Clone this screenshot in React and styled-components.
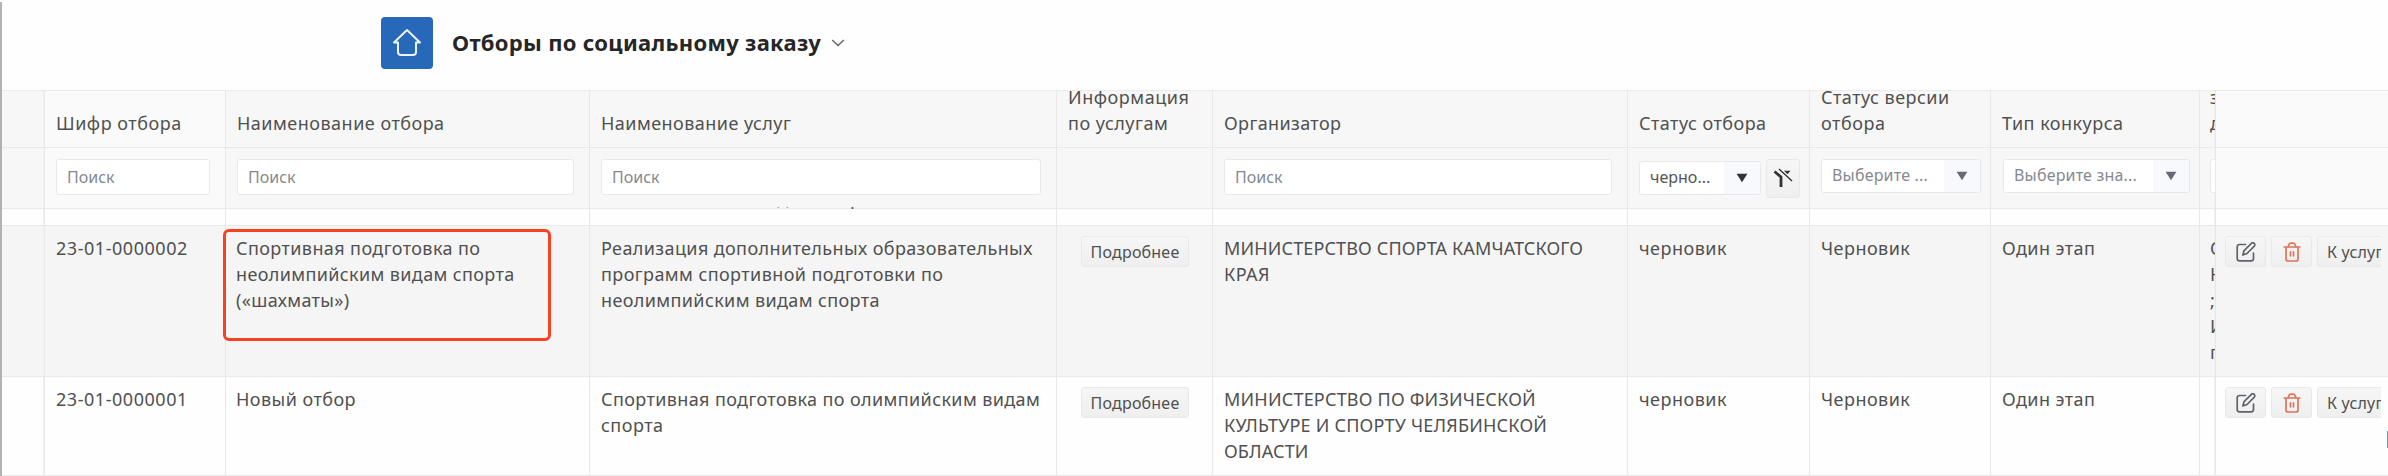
import React from "react";
import styled, { createGlobalStyle } from "styled-components";

const Global = createGlobalStyle`
  *, *::before, *::after { box-sizing: border-box; }
  body {
    margin: 0;
    background: #fefefe;
    font-family: "Noto Sans", "Open Sans", sans-serif;
    font-size: 18px;
    line-height: 26px;
    color: #505050;
    overflow: hidden;
  }
`;

const Page = styled.main`
  position: relative;
  width: 2388px;
  height: 476px;
  overflow: hidden;
`;

const TopBar = styled.header`
  display: flex;
  align-items: center;
  height: 91px;
  padding: 0 0 5px 381px;
  border-bottom: 1px solid #ebebeb;
`;

const HomeButton = styled.button`
  display: grid;
  place-items: center;
  width: 52px;
  height: 52px;
  margin-right: 19px;
  padding: 0;
  border: 0;
  border-radius: 4px;
  background: #2868b9;
  color: #eef4fb;
`;

const Title = styled.h1`
  margin: 0 10px 2px 0;
  font-size: 22px;
  line-height: 30px;
  font-weight: 700;
  letter-spacing: 0.3px;
  color: #262626;
  white-space: nowrap;
`;

const Row = styled.div`
  display: grid;
  grid-template-columns: 45px 181px 364px 467px 156px 415px 182px 181px 209px 16px 172px;
  height: ${(p) => p.$h}px;
  background: ${(p) => p.$bg || "#fefefe"};
`;

const Cell = styled.div`
  min-width: 0;
  overflow: hidden;
  padding: 9px 0 0 ${(p) => p.$left ?? 11}px;
  border-right: 1px solid #e8e8e8;
  border-bottom: 1px solid #e8e8e8;
  box-shadow: ${(p) => (p.$edge ? "inset -1px 0 0 #f1f1f1" : "none")};
  background: ${(p) => (p.$pinned ? "#fafafa" : "transparent")};

  &:last-child { border-right: 0; }
`;

const HeadCell = styled(Cell)`
  display: flex;
  flex-direction: column;
  justify-content: flex-end;
  padding-top: 0;
  padding-bottom: 11px;
`;

const FilterCell = styled(Cell)`
  display: flex;
  align-items: flex-start;
  padding-top: 11px;
`;

const ButtonCell = styled(Cell)`
  padding-top: 10px;
`;

const GapCell = styled(Cell)`
  padding: 0;
  overflow: visible;
`;

const Line = styled.div`
  flex: none;
  white-space: nowrap;
  letter-spacing: ${(p) => p.$ls ?? 0.45}px;
`;

const Input = styled.div`
  flex: none;
  display: flex;
  align-items: center;
  width: ${(p) => p.$w}px;
  height: 36px;
  padding: 0 0 0 10px;
  border: 1px solid #e9e9e9;
  border-radius: 3px;
  background: #fff;
  font-size: 16px;
  color: #858990;
`;

const Select = styled.div`
  flex: none;
  display: flex;
  width: ${(p) => p.$w}px;
  height: 34px;
  margin-top: ${(p) => (p.$active ? 2 : 0)}px;
  border: 1px solid #e6e8eb;
  border-radius: 3px;
  background: #fff;
  overflow: hidden;
  color: ${(p) => (p.$active ? "#555" : "#858990")};
`;

const SelectValue = styled.span`
  flex: 1;
  padding-left: 10px;
  font-size: 16px;
  line-height: 30px;
  letter-spacing: ${(p) => p.$ls}px;
  white-space: nowrap;
`;

const SelectTrigger = styled.span`
  display: grid;
  place-items: center;
  width: 36px;
  padding-bottom: 1px;
  background: #f7f9fc;
  color: ${(p) => (p.$active ? "#333" : "#666b73")};
`;

const Button = styled.button`
  flex: none;
  display: flex;
  align-items: center;
  justify-content: center;
  width: ${(p) => p.$w}px;
  height: 31px;
  padding: 0;
  border: 1px solid #e9e9e9;
  border-radius: 3px;
  background: linear-gradient(#f6f6f6, #efefef);
  font: 16px/24px "Noto Sans", sans-serif;
  letter-spacing: 0.2px;
  white-space: nowrap;
  color: #505050;
`;

const ClearButton = styled(Button)`
  width: 34px;
  height: 39px;
  margin-left: 5px;
  padding-bottom: 2px;
`;

const Actions = styled.div`
  display: flex;
  gap: 5px;
  width: 156px;
  overflow: hidden;

  ${Button}:last-child {
    justify-content: flex-start;
    padding-left: 9px;
  }
`;

const Marked = styled.div`
  position: absolute;
  left: 223px;
  top: 229px;
  width: 328px;
  height: 112px;
  border: 3px solid #f5421f;
  border-radius: 6px;
`;

const LeftEdge = styled.div`
  position: absolute;
  left: 0;
  top: 2px;
  bottom: 0;
  width: 2px;
  background: #b2b2b2;
`;

const Caret = styled.div`
  position: absolute;
  right: 0;
  top: 431px;
  width: 1px;
  height: 17px;
  background: #4a9bea;
`;

const Scrolled = styled.div`
  margin-top: -2px;
  height: 18px;
  padding-left: 11px;
  overflow: hidden;

  ${Line} { margin-top: -22px; }
`;

const Tri = () => (
  <svg width="12" height="10" viewBox="0 0 12 10" fill="currentColor">
    <path d="M0.6 0.8h10.8L6 9.2z" />
  </svg>
);

const Home = () => (
  <svg width="30" height="30" viewBox="0 0 30 30" fill="none" stroke="currentColor" strokeWidth="2" strokeLinejoin="round" strokeLinecap="round">
    <path d="M6 14.500H2L15 2l13 12.500h-4V24a3 3 0 0 1-3 3H9a3 3 0 0 1-3-3z" />
  </svg>
);

const Chevron = () => (
  <svg width="14" height="10" viewBox="0 0 14 10" fill="none" stroke="#666" strokeWidth="1.5">
    <path d="M1.200 2l5.800 5.500L12.800 2" />
  </svg>
);

const ClearFilter = () => (
  <svg width="20" height="20" viewBox="0 0 20 20" fill="none" stroke="#333" strokeWidth="2">
    <path d="M1.500 3.500L8 9v10" strokeWidth="2.800" />
    <path d="M6 1l13 12" strokeWidth="1.400" />
    <path d="M11 2.800h6.500l-3 3.500z" fill="#333" stroke="none" />
  </svg>
);

const Edit = () => (
  <svg width="20" height="20" viewBox="0 0 20 20" fill="none" stroke="#60636a" strokeWidth="1.700" strokeLinejoin="round" strokeLinecap="round">
    <path d="M9.500 2.500H3.500A2.300 2.300 0 0 0 1.200 4.800v11.700a2.300 2.300 0 0 0 2.300 2.300h11.700a2.300 2.300 0 0 0 2.300-2.300V11" />
    <path d="M15.400 1.400a1.900 1.900 0 0 1 2.900 2.700L11 11.500l-4.200 1.400 1.300-4.300z" />
  </svg>
);

const Trash = () => (
  <svg width="18" height="20" viewBox="0 0 18 20" fill="none" stroke="#e07558" strokeWidth="1.700" strokeLinejoin="round" strokeLinecap="round">
    <path d="M1.200 5h15.600M3 5v12a2 2 0 0 0 2 2h8a2 2 0 0 0 2-2V5M5 5l1-2.600A2 2 0 0 1 7.800 1.200h2.400A2 2 0 0 1 12 2.400L13 5" />
    <path d="M7.500 9.800v4M10.500 9.800v4" />
  </svg>
);

const Text = ({ lines }) =>
  lines.map(([text, ls], i) => (
    <Line key={i} $ls={ls}>{text}</Line>
  ));

const columns = [
  { lines: [], edge: true },
  { lines: [["Шифр отбора", 0.52]], pinned: true },
  { lines: [["Наименование отбора", 0.49]] },
  { lines: [["Наименование услуг", 0.45]] },
  { lines: [["Информация", 0.55], ["по услугам", 0.5]] },
  { lines: [["Организатор", 0.37]] },
  { lines: [["Статус отбора", 0.46]] },
  { lines: [["Статус версии", 0.47], ["отбора", 0.55]] },
  { lines: [["Тип конкурса", 0.48]] },
  { lines: [["за", 0.4], ["дата", 0.4]], edge: true, left: 10 },
  { lines: [], pinned: true },
];

const rows = [
  {
    h: 151,
    bg: "#f5f5f5",
    code: "23-01-0000002",
    name: [["Спортивная подготовка по", 0.4], ["неолимпийским видам спорта", 0.37], ["(«шахматы»)", 0.35]],
    services: [
      ["Реализация дополнительных образовательных", 0.39],
      ["программ спортивной подготовки по", 0.41],
      ["неолимпийским видам спорта", 0.38],
    ],
    org: [["МИНИСТЕРСТВО СПОРТА КАМЧАТСКОГО", 0.14], ["КРАЯ", 0.4]],
    extra: [["О", 0], ["Н", 0], [";", 0], ["И", 0], ["п", 0]],
  },
  {
    h: 99,
    code: "23-01-0000001",
    name: [["Новый отбор", 0.45]],
    services: [["Спортивная подготовка по олимпийским видам", 0.38], ["спорта", 0.48]],
    org: [["МИНИСТЕРСТВО ПО ФИЗИЧЕСКОЙ", 0.2], ["КУЛЬТУРЕ И СПОРТУ ЧЕЛЯБИНСКОЙ", 0.21], ["ОБЛАСТИ", 0.15]],
    extra: [],
  },
];

const DropDown = ({ w, text, ls, active }) => (
  <Select $w={w} $active={active}>
    <SelectValue $ls={ls}>{text}</SelectValue>
    <SelectTrigger $active={active}><Tri /></SelectTrigger>
  </Select>
);

const DataRow = ({ row }) => (
  <Row $h={row.h} $bg={row.bg}>
    <Cell $edge />
    <Cell><Text lines={[[row.code, 0.54]]} /></Cell>
    <Cell $left={10}><Text lines={row.name} /></Cell>
    <Cell><Text lines={row.services} /></Cell>
    <ButtonCell $left={24}><Button $w={108}>Подробнее</Button></ButtonCell>
    <Cell><Text lines={row.org} /></Cell>
    <Cell><Text lines={[["черновик", 0.49]]} /></Cell>
    <Cell><Text lines={[["Черновик", 0.47]]} /></Cell>
    <Cell><Text lines={[["Один этап", 0.44]]} /></Cell>
    <Cell $edge $left={10}><Text lines={row.extra} /></Cell>
    <ButtonCell $left={9}>
      <Actions>
        <Button $w={41} aria-label="Редактировать"><Edit /></Button>
        <Button $w={41} aria-label="Удалить"><Trash /></Button>
        <Button $w={84}>К услугам</Button>
      </Actions>
    </ButtonCell>
  </Row>
);

export default function App() {
  return (
    <Page>
      <Global />
      <TopBar>
        <HomeButton aria-label="Главная"><Home /></HomeButton>
        <Title>Отборы по социальному заказу</Title>
        <Chevron />
      </TopBar>
      <Row $h={57} $bg="#f7f7f7">
        {columns.map((c, i) => (
          <HeadCell key={i} $pinned={c.pinned} $edge={c.edge} $left={c.left}><Text lines={c.lines} /></HeadCell>
        ))}
      </Row>
      <Row $h={61} $bg="#f7f7f7">
        <FilterCell $edge />
        <FilterCell $pinned><Input $w={154}>Поиск</Input></FilterCell>
        <FilterCell><Input $w={337}>Поиск</Input></FilterCell>
        <FilterCell><Input $w={440}>Поиск</Input></FilterCell>
        <FilterCell />
        <FilterCell><Input $w={388}>Поиск</Input></FilterCell>
        <FilterCell>
          <DropDown w={122} text="черно..." ls={0.02} active />
          <ClearButton aria-label="Сбросить фильтр"><ClearFilter /></ClearButton>
        </FilterCell>
        <FilterCell><DropDown w={160} text="Выберите ..." ls={0.19} /></FilterCell>
        <FilterCell $left={12}><DropDown w={187} text="Выберите зна..." ls={0.18} /></FilterCell>
        <FilterCell $edge $left={10}><Select $w={100} /></FilterCell>
        <FilterCell $pinned />
      </Row>
      <Row $h={17}>
        {columns.map((c, i) => (
          <GapCell key={i} $edge={c.edge}>
            {i === 3 && (
              <Scrolled><Line $ls={0.4}>неолимпийским видам спорта</Line></Scrolled>
            )}
          </GapCell>
        ))}
      </Row>
      {rows.map((row) => <DataRow key={row.code} row={row} />)}
      <Marked />
      <LeftEdge />
      <Caret />
    </Page>
  );
}
